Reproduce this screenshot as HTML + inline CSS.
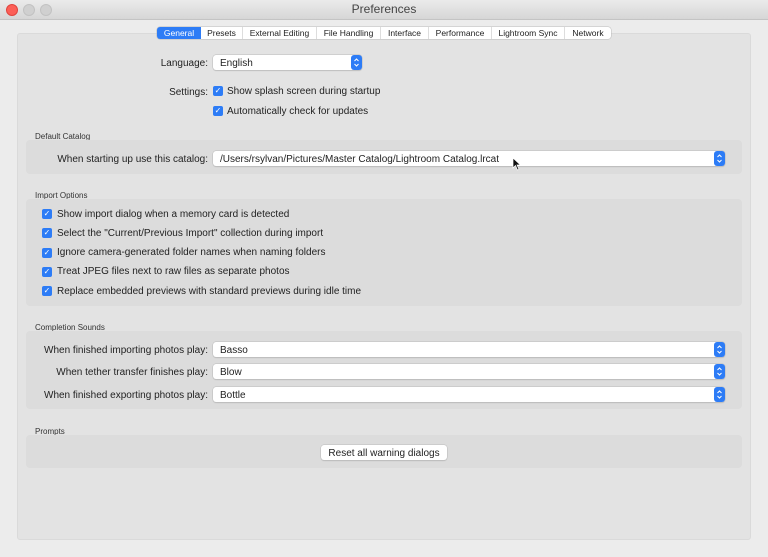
<!DOCTYPE html><html><head><style>
*{margin:0;padding:0;box-sizing:border-box}
body{width:768px;height:557px;background:#ececec;font-family:"Liberation Sans",sans-serif;font-size:10px;color:#222;position:relative;overflow:hidden}
.a{position:absolute}
.title{left:0;top:0;width:768px;height:20px;background:linear-gradient(#ebebeb,#d6d6d6);border-bottom:1px solid #c4c4c4;text-align:center;font-size:12px;line-height:19px;color:#444}
.dot{top:4px;width:12px;height:12px;border-radius:50%;background:#d0d0d0;border:1px solid #c2c2c2}
.panel{left:17px;top:33px;width:734px;height:507px;background:#e3e3e3;border:1px solid #dadada;border-radius:3px}
.grp{left:26px;width:716px;background:#dcdcdc;border-radius:4px}
.glab{left:35px;font-size:8px;color:#333}
.pop{height:15px;background:#fff;border-radius:3px;box-shadow:0 0 0 .5px #bbb,0 1px 1px rgba(0,0,0,.15);padding-left:7px;line-height:17px;font-size:10px}
.pop svg{position:absolute;right:0;top:0}
.cb{width:10px;height:10px;background:#2d7cf6;border-radius:2px;color:#fff;font-size:8px;line-height:10px;text-align:center}
.lbl{text-align:right}
.tabs{left:157px;top:27px;height:12px;display:flex;background:#fff;border-radius:3px;box-shadow:0 0 0 .5px #bbb;font-size:8.5px;line-height:12px;width:454px}
.tabs span{flex:auto;text-align:center;border-left:1px solid #ddd}
.tabs span.on{background:#2d7cf6;color:#fff;border-radius:3px 0 0 3px;border:0}
.t{line-height:16px}
</style></head><body>
<div class="a title">Preferences</div>
<div class="a dot" style="left:6px;background:#fc5f57;border-color:#e0443e"></div>
<div class="a dot" style="left:23px"></div>
<div class="a dot" style="left:40px"></div>
<div class="a panel"></div>
<div class="a tabs"><span class="on" style="flex:0 0 44px">General</span><span style="border:0;flex:0 0 41px">Presets</span><span style="flex:0 0 74px">External Editing</span><span style="flex:0 0 64px">File Handling</span><span style="flex:0 0 48px">Interface</span><span style="flex:0 0 63px">Performance</span><span style="flex:0 0 73px">Lightroom Sync</span><span>Network</span></div>

<div class="a lbl t" style="left:100px;width:108px;top:56px">Language:</div>
<div class="a pop" style="left:213px;top:55px;width:149px">English<svg width="11" height="15"><rect width="11" height="15" rx="3" fill="#2d7cf6"/><path d="M3.5 6 L5.5 4 L7.5 6 M3.5 9 L5.5 11 L7.5 9" stroke="#fff" fill="none" stroke-width="1"/></svg></div>
<div class="a lbl t" style="left:100px;width:108px;top:85px">Settings:</div>
<div class="a cb" style="left:213px;top:86px">✓</div><div class="a t" style="left:227px;top:84px">Show splash screen during startup</div>
<div class="a cb" style="left:213px;top:106px">✓</div><div class="a t" style="left:227px;top:104px">Automatically check for updates</div>

<div class="a glab" style="top:132px">Default Catalog</div>
<div class="a grp" style="top:140px;height:34px"></div>
<div class="a lbl t" style="left:30px;width:178px;top:152px">When starting up use this catalog:</div>
<div class="a pop" style="left:213px;top:151px;width:512px">/Users/rsylvan/Pictures/Master Catalog/Lightroom Catalog.lrcat<svg width="11" height="15"><rect width="11" height="15" rx="3" fill="#2d7cf6"/><path d="M3.5 6 L5.5 4 L7.5 6 M3.5 9 L5.5 11 L7.5 9" stroke="#fff" fill="none" stroke-width="1"/></svg></div>

<div class="a glab" style="top:191px">Import Options</div>
<div class="a grp" style="top:199px;height:107px"></div>
<div class="a cb" style="left:42px;top:209px">✓</div><div class="a t" style="left:57px;top:207px">Show import dialog when a memory card is detected</div>
<div class="a cb" style="left:42px;top:228px">✓</div><div class="a t" style="left:57px;top:226px">Select the "Current/Previous Import" collection during import</div>
<div class="a cb" style="left:42px;top:248px">✓</div><div class="a t" style="left:57px;top:245px">Ignore camera-generated folder names when naming folders</div>
<div class="a cb" style="left:42px;top:267px">✓</div><div class="a t" style="left:57px;top:264px">Treat JPEG files next to raw files as separate photos</div>
<div class="a cb" style="left:42px;top:286px">✓</div><div class="a t" style="left:57px;top:284px">Replace embedded previews with standard previews during idle time</div>

<div class="a glab" style="top:323px">Completion Sounds</div>
<div class="a grp" style="top:331px;height:78px"></div>
<div class="a lbl t" style="left:20px;width:188px;top:343px">When finished importing photos play:</div>
<div class="a pop" style="left:213px;top:342px;width:512px">Basso<svg width="11" height="15"><rect width="11" height="15" rx="3" fill="#2d7cf6"/><path d="M3.5 6 L5.5 4 L7.5 6 M3.5 9 L5.5 11 L7.5 9" stroke="#fff" fill="none" stroke-width="1"/></svg></div>
<div class="a lbl t" style="left:20px;width:188px;top:365px">When tether transfer finishes play:</div>
<div class="a pop" style="left:213px;top:364px;width:512px">Blow<svg width="11" height="15"><rect width="11" height="15" rx="3" fill="#2d7cf6"/><path d="M3.5 6 L5.5 4 L7.5 6 M3.5 9 L5.5 11 L7.5 9" stroke="#fff" fill="none" stroke-width="1"/></svg></div>
<div class="a lbl t" style="left:20px;width:188px;top:388px">When finished exporting photos play:</div>
<div class="a pop" style="left:213px;top:387px;width:512px">Bottle<svg width="11" height="15"><rect width="11" height="15" rx="3" fill="#2d7cf6"/><path d="M3.5 6 L5.5 4 L7.5 6 M3.5 9 L5.5 11 L7.5 9" stroke="#fff" fill="none" stroke-width="1"/></svg></div>

<div class="a glab" style="top:427px">Prompts</div>
<div class="a grp" style="top:435px;height:33px"></div>
<div class="a pop" style="left:321px;top:445px;width:126px;padding:0;text-align:center">Reset all warning dialogs</div>
<svg class="a" style="left:512px;top:157px" width="10" height="14" viewBox="0 0 10 14"><path d="M1 1 L1 11 L3.5 8.5 L5.5 13 L7 12.3 L5 8 L8.5 8 Z" fill="#111" stroke="#fff" stroke-width=".7"/></svg>
</body></html>
